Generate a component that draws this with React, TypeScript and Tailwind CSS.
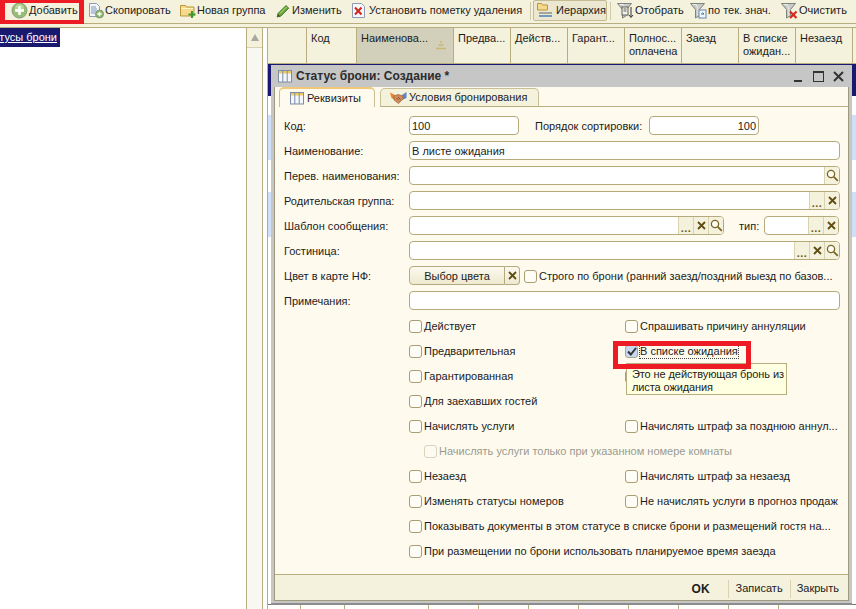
import type { ReactNode } from 'react';

const AddIcon = () => (
  <svg width="17" height="17" viewBox="0 0 17 17">
    <circle cx="8.5" cy="8.5" r="7.5" fill="#97bd74" stroke="#8a9a80" />
    <circle cx="8.5" cy="6.5" r="4.5" fill="#b7d69a" />
    <path d="M8.5 4v9M4 8.5h9" stroke="#fff" strokeWidth="2.4" />
  </svg>
);

const CopyIcon = () => (
  <svg width="17" height="17" viewBox="0 0 17 17">
    <path d="M1.5 1.5h7l3 3v10h-10z" fill="#f4f6fa" stroke="#8c9bb0" />
    <path d="M3 5h5M3 7h6M3 9h5M3 11h4" stroke="#7f93b8" />
    <circle cx="11.5" cy="12" r="4" fill="#8db56c" stroke="#7d9a78" />
    <path d="M11.5 9.8v4.4M9.3 12h4.4" stroke="#fff" strokeWidth="1.4" />
  </svg>
);

const FolderIcon = () => (
  <svg width="17" height="17" viewBox="0 0 17 17">
    <path d="M.5 3.5h5l1 1.5h7.500v9H.5z" fill="#f6d98a" stroke="#b8963e" />
    <path d="M1.500 6.500h11.500" stroke="#fff2c4" />
    <path d="M12 9v7M8.500 12.500h7" stroke="#3f9a2c" strokeWidth="2" />
  </svg>
);

const PencilIcon = () => (
  <svg width="15" height="15" viewBox="0 0 15 15">
    <path d="M2 10.500 10 2.500l2.700 2.700-8 8-3.500.8z" fill="#6aa83e" stroke="#3f7a24" />
    <path d="M4 10.500 10.500 4" stroke="#b6da8c" />
    <path d="m1.500 13.800.6-2.600 2 2z" fill="#5c4a2a" />
  </svg>
);

const DeleteMarkIcon = () => (
  <svg width="13" height="17" viewBox="0 0 13 17">
    <path d="M.5 1.500h9l3 3v11H.5z" fill="#f7f8fb" stroke="#8e9bb2" />
    <path d="m3 5.500 6.500 7M9.500 5.500 3 12.500" stroke="#d2281c" strokeWidth="2" />
  </svg>
);

const HierarchyIcon = () => (
  <svg width="17" height="17" viewBox="0 0 17 17">
    <path d="M1.500 1.500h4l1 1.500h5v5h-10z" fill="#f6d98a" stroke="#b8963e" />
    <path d="M3 11h13" stroke="#8d8f8a" strokeWidth="1.500" />
    <path d="M3 14h13" stroke="#6f9ac4" strokeWidth="2" />
  </svg>
);

const FunnelIcon = ({ badge }: { badge: 'select' | 'value' | 'clear' }) => (
  <svg width="17" height="17" viewBox="0 0 17 17">
    <path d="M.5 1.500h14l-5 6v6l-4 2.500V7.500z" fill="#c9ccc6" stroke="#7d827c" />
    <path d="M2.500 2.500h4l1.500 5v6" stroke="#eceeea" fill="none" />
    {badge === 'select' && (
      <>
        <rect x="5" y="5" width="6" height="8" fill="#f4f4ee" stroke="#5c6058" />
        <path d="M6.500 7h3M6.500 9h3" stroke="#5c6058" />
        <path d="M14 5v10m-2-2 2 2.500 2-2.500" stroke="#333" fill="none" />
      </>
    )}
    {badge === 'value' && (
      <>
        <rect x="9" y="8" width="7" height="8" fill="#f2f6fc" stroke="#5e86b4" />
        <path d="M11 12h3m0 0-1.500-1.500" stroke="#3a66a0" fill="none" />
      </>
    )}
    {badge === 'clear' && <path d="m9 9.500 6.500 6.500M15.500 9.500 9 16" stroke="#d32a1c" strokeWidth="2.200" />}
  </svg>
);

const GridIcon = () => (
  <svg width="14" height="14" viewBox="0 0 14 14">
    <rect x=".5" y="1.500" width="13" height="11.500" fill="#f3f6fa" stroke="#7d8ea4" />
    <rect x="1" y="2" width="12" height="2.500" fill="#eecb62" />
    <path d="M4.800 2v11M9.200 2v11" stroke="#7d8ea4" />
  </svg>
);

const HandshakeIcon = () => (
  <svg width="17" height="14" viewBox="0 0 17 14">
    <path d="M0 1.500 5 4v5L1.500 7z" fill="#e8842c" />
    <path d="M16.500 1 12 4v5l4.500-2z" fill="#5c86c4" />
    <path d="m4 5 4-1.500L13 5v3l-4.500 4.500L4 9z" fill="#d08a5c" stroke="#a0603a" strokeWidth=".7" />
    <path d="m6.500 7 2 2M8 6l2.500 2.500" stroke="#7a4526" strokeWidth=".8" />
  </svg>
);

const SearchGlyph = () => (
  <svg width="13" height="13" viewBox="0 0 13 13">
    <circle cx="5" cy="5" r="3.600" fill="#fffdf4" stroke="#7a6326" strokeWidth="1.300" />
    <path d="m7.800 7.800 4 4" stroke="#7a6326" strokeWidth="1.800" />
  </svg>
);

const CrossGlyph = () => (
  <svg width="9" height="9" viewBox="0 0 9 9">
    <path d="m1 1 7 7M8 1 1 8" stroke="#5f4c12" strokeWidth="1.800" />
  </svg>
);

const SelectGlyph = () => (
  <span className="mt-[6px] text-[11px] font-bold leading-none tracking-[0.5px] text-[#6b5a1e]">...</span>
);

type FieldButton = 'select' | 'clear' | 'search';

function Field({ className, value, right, buttons = [] }: { className: string; value?: string; right?: boolean; buttons?: FieldButton[] }) {
  return (
    <div className={`flex h-[19px] items-stretch overflow-hidden rounded-[4px] border border-[#b5aa7c] bg-white ${className}`}>
      <span className={`flex-1 px-[2px] leading-[19px] ${right ? 'text-right' : ''}`}>{value}</span>
      {buttons.map((b, i) => (
        <span key={i} className="flex w-[15px] items-center justify-center border-l border-[#d8d2b0] bg-[#f4f1dc]">
          {b === 'select' && <SelectGlyph />}
          {b === 'clear' && <CrossGlyph />}
          {b === 'search' && <SearchGlyph />}
        </span>
      ))}
    </div>
  );
}

function FormRow({ label, children }: { label: string; children: ReactNode }) {
  return (
    <div className="flex h-[19px] items-center">
      <span className="w-[125px] shrink-0 pt-[2px]">{label}</span>
      {children}
    </div>
  );
}

function Box({ checked, disabled }: { checked?: boolean; disabled?: boolean }) {
  return (
    <span
      className={`flex h-[13px] w-[13px] shrink-0 items-center justify-center rounded-[3px] border ${
        disabled ? 'border-[#d8d4c0] bg-[#fdfaf0]' : checked ? 'border-[#a8a888] bg-[#c9d8f2]' : 'border-[#a89e72] bg-[#fffdf6]'
      }`}
    >
      {checked && (
        <svg width="10" height="9" viewBox="0 0 10 9">
          <path d="m1 4.500 2.800 3L9 1" stroke="#333" strokeWidth="2" fill="none" />
        </svg>
      )}
    </span>
  );
}

function Check({ label, checked, disabled, focused, className = '' }: { label?: string; checked?: boolean; disabled?: boolean; focused?: boolean; className?: string }) {
  return (
    <div className={`flex h-[19px] items-center gap-[2px] whitespace-nowrap pt-[2px] ${disabled ? 'text-[#9a9a90]' : ''} ${className}`}>
      <Box checked={checked} disabled={disabled} />
      {label && <span className={`leading-[13px] ${focused ? 'outline-1 outline-dotted outline-[#444]' : ''}`}>{label}</span>}
    </div>
  );
}

function CheckRow({ left, right }: { left: ReactNode; right?: ReactNode }) {
  return (
    <div className="grid h-[19px] grid-cols-[216px_1fr] pl-[125px]">
      <div>{left}</div>
      <div>{right}</div>
    </div>
  );
}

function ToolButton({ icon, label, className }: { icon: ReactNode; label: string; className: string }) {
  return (
    <div className={`flex shrink-0 items-center whitespace-nowrap ${className}`}>
      {icon}
      <span>{label}</span>
    </div>
  );
}

const columns = [
  { w: 'w-[39px]', t: '' },
  { w: 'w-[50px]', t: 'Код' },
  { w: 'w-[97px] bg-[#d2cfba]', t: 'Наименова...', sorted: true },
  { w: 'w-[57px]', t: 'Предва...' },
  { w: 'w-[57px]', t: 'Действ...' },
  { w: 'w-[57px]', t: 'Гарант...' },
  { w: 'w-[57px]', t: 'Полнос... оплачена' },
  { w: 'w-[57px]', t: 'Заезд' },
  { w: 'w-[57px]', t: 'В списке ожидан...' },
  { w: 'w-[57px]', t: 'Незаезд' },
  { w: 'flex-1', t: '' },
];

const footColumns = ['w-[33px]', 'w-[44px]', 'w-[84px]', 'w-[50px]', 'w-[50px]', 'w-[50px]', 'w-[50px]', 'w-[50px]', 'w-[50px]', 'w-[50px]'];

export default function App() {
  return (
    <div className="relative flex h-[609px] w-[856px] flex-col overflow-hidden bg-white font-['Liberation_Sans',sans-serif] text-[11px] text-[#1c1c1c]">
      {/* Toolbar */}
      <div className="flex h-[24px] shrink-0 items-center border-b border-[#b8ad7e] bg-[#f4f1dc] pb-[2px] pl-[11px]">
        <ToolButton className="w-[77px] gap-[1px]" icon={<AddIcon />} label="Добавить" />
        <ToolButton className="w-[92px]" icon={<CopyIcon />} label="Скопировать" />
        <ToolButton className="w-[96px]" icon={<FolderIcon />} label="Новая группа" />
        <ToolButton className="w-[76px] gap-[1px]" icon={<PencilIcon />} label="Изменить" />
        <ToolButton className="w-[178px] gap-[4px]" icon={<DeleteMarkIcon />} label="Установить пометку удаления" />
        <span className="mr-[2px] h-[18px] w-px bg-[#cfc9a6]" />
        <ToolButton className="h-[21px] w-[74px] gap-[3px] rounded-[2px] border border-[#c4bb90] bg-[#ebe7d0] pl-[2px]" icon={<HierarchyIcon />} label="Иерархия" />
        <span className="mx-[3px] h-[18px] w-px bg-[#cfc9a6]" />
        <ToolButton className="ml-[3px] w-[73px] gap-[1px]" icon={<FunnelIcon badge="select" />} label="Отобрать" />
        <ToolButton className="w-[91px] gap-[1px]" icon={<FunnelIcon badge="value" />} label="по тек. знач." />
        <ToolButton className="gap-[1px]" icon={<FunnelIcon badge="clear" />} label="Очистить" />
      </div>
      <div className="h-[3px] shrink-0 bg-[#f4f1dc]" />

      {/* Body */}
      <div className="flex min-h-0 flex-1 border-t border-[#b8ad7e]">
        {/* Tree */}
        <div className="w-[246px] shrink-0 bg-white">
          <div className="flex h-[19px] w-[60px] justify-end overflow-hidden whitespace-nowrap bg-[#191970] pr-[3px] leading-[19px] text-white underline">
            <span className="shrink-0">тусы брони</span>
          </div>
        </div>
        <div className="flex w-[17px] shrink-0 flex-col border-x border-[#b8ad7e] bg-[#f9f7f1]">
          <div className="flex h-[20px] items-center justify-center border-b border-[#d8d2b0] bg-[#f4f1dc]">
            <span className="h-0 w-0 border-x-[4px] border-b-[7px] border-x-transparent border-b-[#a8a8a0]" />
          </div>
        </div>
        <div className="w-[4px] shrink-0 bg-white" />

        {/* Grid behind the window */}
        <div className="flex min-w-0 flex-1 flex-col border-l border-[#b8ad7e]">
          <div className="flex h-[36px] shrink-0 border-b border-[#b8ad7e] bg-[#f4f1dc]">
            {columns.map((c, i) => (
              <div key={i} className={`relative shrink-0 border-r border-[#b8ad7e] pl-[4px] pr-[2px] pt-[4px] leading-[13px] ${c.w}`}>
                {c.t}
                {c.sorted && (
                  <svg className="absolute right-[6px] top-[13px]" width="12" height="9" viewBox="0 0 12 9">
                    <path d="M5 1h2M3.500 4h5M1 7.500h10" stroke="#c8b878" strokeWidth="1.500" />
                  </svg>
                )}
              </div>
            ))}
          </div>
          <div className="h-[32px] shrink-0 bg-[#191970]" />
          <div className="h-[19px] shrink-0" />
          <div className="h-[45px] shrink-0 bg-[#cfdff8]" />
          <div className="h-[32px] shrink-0" />
          <div className="h-[45px] shrink-0 bg-[#cfdff8]" />
          <div className="mt-auto flex h-[5px] shrink-0 border-t border-[#777]">
            {footColumns.map((w, i) => (
              <div key={i} className={`border-r border-[#b8ad7e] ${w}`} />
            ))}
          </div>
        </div>
      </div>

      {/* Dialog window */}
      <div className="absolute left-[271px] top-[65px] flex h-[540px] w-[581px] flex-col border-b-2 border-b-[#8c8c8c] bg-[#c6c6c6] px-[3px] pb-[2px]">
        <div className="flex h-[22px] shrink-0 items-center pl-[4px] pr-[5px]">
          <GridIcon />
          <span className="ml-[4px] flex-1 text-[12px] font-bold text-[#2c2c2c]">Статус брони: Создание *</span>
          <span className="mr-[11px] mt-[10px] h-[2px] w-[8px] bg-[#333]" />
          <span className="mr-[9px] h-[11px] w-[11px] border border-t-2 border-[#333]" />
          <svg width="11" height="11" viewBox="0 0 11 11">
            <path d="m1 1 9 9M10 1 1 10" stroke="#333" strokeWidth="2" />
          </svg>
        </div>
        <div className="flex min-h-0 flex-1 flex-col border-x border-b border-[#a09a7c] bg-[#fffaee]">
          {/* Tabs */}
          <div className="flex h-[20px] shrink-0 items-end pl-[4px]">
            <div className="flex h-[20px] w-[96px] items-center gap-[3px] rounded-t-[5px] border-x border-t-2 border-x-[#c8bf94] border-t-[#f0c878] bg-[#fffaee] pl-[10px]">
              <GridIcon />
              <span>Реквизиты</span>
            </div>
            <div className="ml-[5px] flex h-[19px] w-[159px] items-center gap-[2px] rounded-t-[5px] border border-[#c8bf94] border-b-[#b8ad7e] bg-[#f4f1dc] pl-[9px]">
              <HandshakeIcon />
              <span>Условия бронирования</span>
            </div>
            <div className="h-px flex-1 bg-[#b8ad7e]" />
          </div>

          {/* Form */}
          <div className="relative flex min-h-0 flex-1 flex-col gap-[6px] pl-[9px] pr-[8px] pt-[9px]">
            <FormRow label="Код:">
              <Field className="w-[110px]" value="100" />
              <span className="ml-[16px] w-[114px] pt-[2px]">Порядок сортировки:</span>
              <Field className="w-[110px]" value="100" right />
            </FormRow>
            <FormRow label="Наименование:">
              <Field className="flex-1" value="В листе ожидания" />
            </FormRow>
            <FormRow label="Перев. наименования:">
              <Field className="flex-1" buttons={['search']} />
            </FormRow>
            <FormRow label="Родительская группа:">
              <Field className="flex-1" buttons={['select', 'clear']} />
            </FormRow>
            <FormRow label="Шаблон сообщения:">
              <Field className="w-[315px]" buttons={['select', 'clear', 'search']} />
              <span className="ml-[15px] w-[25px] pt-[2px]">тип:</span>
              <Field className="w-[75px]" buttons={['select', 'clear']} />
            </FormRow>
            <FormRow label="Гостиница:">
              <Field className="flex-1" buttons={['select', 'clear', 'search']} />
            </FormRow>
            <FormRow label="Цвет в карте НФ:">
              <div className="flex h-[19px] w-[96px] items-center justify-center rounded-l-[4px] border border-[#b5aa7c] bg-linear-to-b from-[#fbf9ee] to-[#eee9d0] pt-[1px]">Выбор цвета</div>
              <div className="flex h-[19px] w-[15px] items-center justify-center rounded-r-[4px] border border-l-0 border-[#b5aa7c] bg-linear-to-b from-[#fbf9ee] to-[#eee9d0]">
                <CrossGlyph />
              </div>
              <Check className="ml-[4px]" label="Строго по брони (ранний заезд/поздний выезд по базов..." />
            </FormRow>
            <FormRow label="Примечания:">
              <Field className="flex-1" />
            </FormRow>

            <CheckRow left={<Check label="Действует" />} right={<Check label="Спрашивать причину аннуляции" />} />
            <CheckRow left={<Check label="Предварительная" />} right={<Check label="В списке ожидания" checked focused />} />
            <CheckRow left={<Check label="Гарантированная" />} right={<Check />} />
            <CheckRow left={<Check label="Для заехавших гостей" />} />
            <CheckRow left={<Check label="Начислять услуги" />} right={<Check label="Начислять штраф за позднюю аннул..." />} />
            <CheckRow left={<Check className="ml-[15px]" label="Начислять услуги только при указанном номере комнаты" disabled />} />
            <CheckRow left={<Check label="Незаезд" />} right={<Check label="Начислять штраф за незаезд" />} />
            <CheckRow left={<Check label="Изменять статусы номеров" />} right={<Check label="Не начислять услуги в прогноз продаж" />} />
            <CheckRow left={<Check label="Показывать документы в этом статусе в списке брони и размещений гостя на..." />} />
            <CheckRow left={<Check label="При размещении по брони использовать планируемое время заезда" />} />
          </div>

          {/* Footer */}
          <div className="flex h-[26px] shrink-0 items-center justify-end border-t border-[#b8ad7e] bg-[#f4f1dc] pr-[9px] pt-[2px]">
            <span className="mr-[18px] text-[12px] font-bold">OK</span>
            <span className="h-[18px] w-px bg-[#d8d2b0]" />
            <span className="mx-[7px]">Записать</span>
            <span className="h-[18px] w-px bg-[#d8d2b0]" />
            <span className="ml-[6px]">Закрыть</span>
          </div>
        </div>
      </div>

      {/* Hint */}
      <div className="absolute left-[626px] top-[363px] h-[32px] w-[161px] whitespace-nowrap border border-[#b8ad7e] bg-[#ffffe1] pl-[5px] pt-[4px] leading-[12.5px] tracking-[-0.1px]">
        Это не действующая бронь из
        <br />
        листа ожидания
      </div>

      {/* Red annotation frames */}
      <div className="absolute left-0 top-0 h-[24px] w-[84px] border-x-[5px] border-b-[4px] border-t-[3px] border-[#ed1c24]" />
      <div className="absolute left-[613px] top-[341px] h-[28px] w-[138px] border-[5px] border-[#ed1c24]" />
    </div>
  );
}
